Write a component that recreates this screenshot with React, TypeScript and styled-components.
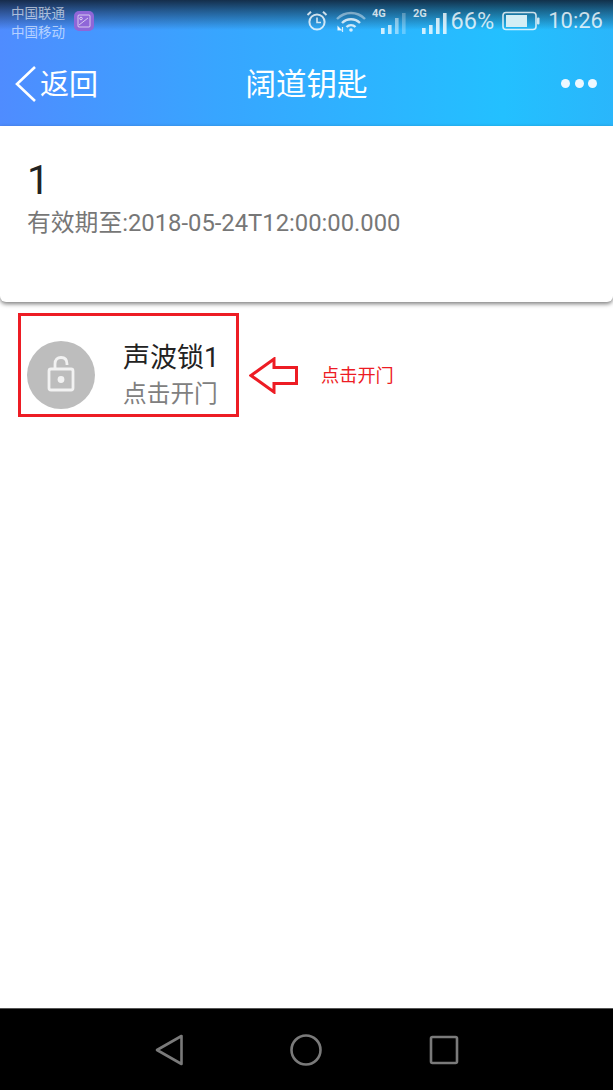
import React from "react";
import styled, { createGlobalStyle } from "styled-components";

const Global = createGlobalStyle`
  html, body { margin: 0; padding: 0; background: #fff; }
  body { font-family: Roboto, "Noto Sans CJK SC", sans-serif; }
`;
const CJK = `Roboto, "Noto Sans CJK SC", sans-serif`;

const Page = styled.div`
  width: 613px; height: 1090px; display: flex; flex-direction: column; overflow: hidden; background: #fff;
`;
const Header = styled.header`
  height: 126px; flex: none; display: flex; flex-direction: column; position: relative;
  background: linear-gradient(90deg, #4f8cff 0%, #38a5ff 35%, #23c0ff 82%, #2ab6fb 100%);
  &::before {
    content: ""; position: absolute; left: 0; right: 0; top: 0; height: 30px;
    background: linear-gradient(180deg, rgba(15,30,50,.88) 0%, rgba(15,30,50,.55) 35%, rgba(15,30,50,0) 100%);
  }
`;
const StatusBar = styled.div`
  height: 42px; flex: none; position: relative; display: flex; align-items: flex-start; padding: 4px 10px 0 11px; box-sizing: border-box;
`;
const Carriers = styled.div`
  display: flex; flex-direction: column; font: 13.5px/19px ${CJK}; color: rgba(255,255,255,.6); width: 54px; white-space: nowrap;
`;
const PurpleBadge = styled.div`
  width: 20px; height: 20px; margin: 7px 0 0 9px; border-radius: 5px; background: #8f66d8; display: flex; align-items: center; justify-content: center;
`;
const StatusRight = styled.div`
  margin-left: auto; display: flex; align-items: center; height: 34px; color: rgba(255,255,255,.78);
`;
const StatusGlyph = styled.svg<{ $gap: number }>`
  flex: none; margin-right: ${(p) => p.$gap}px;
`;
const Percent = styled.span`
  font: 23.5px/34px Roboto, sans-serif; margin: 0 8px 0 4px;
`;
const Clock = styled.span`
  font: 22px/34px Roboto, sans-serif; margin-left: 8px;
`;
const NavRow = styled.div`
  flex: 1; position: relative; display: flex; align-items: center; justify-content: space-between; padding: 0 16px 0 15px; color: #fff;
`;
const Back = styled.div`
  display: flex; align-items: center; gap: 3px; font: 29px/40px ${CJK};
`;
const BackLabel = styled.span`
  padding-top: 2px;
`;
const Title = styled.div`
  position: absolute; left: 0; right: 0; padding-top: 2px; text-align: center; font: 400 30.5px/40px ${CJK};
`;
const Dots = styled.div`
  display: flex; gap: 4.5px; padding-bottom: 1px;
`;
const Dot = styled.span`
  width: 9px; height: 9px; border-radius: 50%; background: #eef8ff;
`;
const Card = styled.section`
  height: 176px; flex: none; box-sizing: border-box; padding: 29px 27px 0; background: #fff; border-radius: 0 0 6px 6px;
  box-shadow: 0 2px 4px rgba(0,0,0,.5);
  position: relative;
`;
const CardNumber = styled.div`
  font: 40px/52px Roboto, sans-serif; color: #222;
`;
const CardMeta = styled.div`
  font: 23.8px/32px ${CJK}; color: #777;
`;
const Body = styled.main`
  flex: 1; padding: 11px 0 0 18px; display: flex; align-items: flex-start;
`;
const LockItem = styled.div`
  width: 221px; height: 104px; box-sizing: border-box; border: 3px solid #ed1c24; display: flex; align-items: center; padding: 20px 0 0 6px;
`;
const LockCircle = styled.div`
  width: 68px; height: 68px; border-radius: 50%; background: #bdbdbd; display: flex; align-items: center; justify-content: center; flex: none;
`;
const LockGlyph = styled.svg`
  margin-bottom: 3px;
`;
const LockText = styled.div`
  margin-left: 28px; padding-top: 2px; display: flex; flex-direction: column;
`;
const LockName = styled.div`
  font: 27px/36px ${CJK}; color: #222; white-space: nowrap;
`;
const LockHint = styled.div`
  font: 23.7px/36px ${CJK}; color: #808080; white-space: nowrap;
`;
const Arrow = styled.svg`
  margin: 44px 0 0 10px; flex: none;
`;
const Note = styled.div`
  font: 18.2px/24px ${CJK}; color: #ed1c24; margin: 51px 0 0 22px; white-space: nowrap;
`;
const BottomNav = styled.nav`
  height: 82px; flex: none; background: #000; display: flex; align-items: center; justify-content: center; gap: 107px; border-top: 1px solid #555; box-sizing: border-box;
`;
const SignalIcon = styled.svg`
  flex: none;
  & + & { margin-left: 7px; }
`;

const Signal: React.FC<{ label: string; dim?: boolean }> = ({ label, dim }) => (
  <SignalIcon width="34" height="26" viewBox="0 0 34 26">
    <text x="0" y="9" fontFamily="Roboto, sans-serif" fontWeight="700" fontSize="11" fill="currentColor">{label}</text>
    <rect x="9" y="20" width="3.6" height="6" fill="currentColor" />
    <rect x="16" y="17" width="3.6" height="9" fill="currentColor" opacity={dim ? 0.9 : 1} />
    <rect x="23" y="10" width="3.6" height="16" fill="currentColor" opacity={dim ? 0.6 : 1} />
    <rect x="30" y="5" width="3.6" height="21" fill="currentColor" opacity={dim ? 0.35 : 1} />
  </SignalIcon>
);

export default function App() {
  return (
    <Page>
      <Global />
      <Header>
        <StatusBar>
          <Carriers>
            <span>中国联通</span>
            <span>中国移动</span>
          </Carriers>
          <PurpleBadge>
            <svg width="14" height="14" viewBox="0 0 14 14" fill="none" stroke="rgba(255,255,255,.65)" strokeWidth="1">
              <rect x="1" y="1" width="12" height="12" rx="1" />
              <circle cx="4" cy="4.5" r="1.3" />
              <path d="M2 11 L11 4" />
            </svg>
          </PurpleBadge>
          <StatusRight>
            <StatusGlyph $gap={8} width="22" height="22" viewBox="0 0 22 22" fill="none" stroke="currentColor" strokeWidth="2">
              <circle cx="11" cy="12" r="7.6" />
              <path d="M11 7.5V12.5H15" strokeWidth="1.6" />
              <path d="M1.5 5 L5 1.8 M20.5 5 L17 1.8" />
            </StatusGlyph>
            <StatusGlyph $gap={6} width="30" height="24" viewBox="0 0 30 24" fill="none" stroke="currentColor" strokeWidth="2.4">
              <path d="M1 10 C9 2 21 2 29 10" opacity=".55" />
              <path d="M6 14 C11 9 19 9 24 14" />
              <path d="M10.5 18 C13 15.5 17 15.5 19.5 18" />
              <circle cx="15" cy="21" r="1.8" fill="currentColor" stroke="none" />
              <path d="M2 18 L5 21 H2 Z M6.5 18 V23" strokeWidth="1.2" fill="currentColor" />
            </StatusGlyph>
            <Signal label="4G" dim />
            <Signal label="2G" />
            <Percent>66%</Percent>
            <svg width="38" height="20" viewBox="0 0 38 20">
              <rect x="1" y="1.5" width="33" height="17" rx="3" fill="none" stroke="currentColor" strokeWidth="1.6" />
              <rect x="4" y="4" width="21" height="12" fill="#d4eef5" />
              <rect x="35" y="6.5" width="2.5" height="7" rx="1" fill="currentColor" />
            </svg>
            <Clock>10:26</Clock>
          </StatusRight>
        </StatusBar>
        <NavRow>
          <Back>
            <svg width="22" height="38" viewBox="0 0 22 38" fill="none" stroke="#fff" strokeWidth="2.6">
              <path d="M20 2 L2 19 L20 36" />
            </svg>
            <BackLabel>返回</BackLabel>
          </Back>
          <Title>阔道钥匙</Title>
          <Dots><Dot /><Dot /><Dot /></Dots>
        </NavRow>
      </Header>
      <Card>
        <CardNumber>1</CardNumber>
        <CardMeta>有效期至:2018-05-24T12:00:00.000</CardMeta>
      </Card>
      <Body>
        <LockItem>
          <LockCircle>
            <LockGlyph width="28" height="36" viewBox="0 0 28 36" fill="none" stroke="#f2f2f2" strokeWidth="2.8">
              <path d="M8 13 V8 C8 3.5 10.5 1.5 14 1.5 C17.5 1.5 20 3.5 20 8 V9" />
              <rect x="2" y="13" width="24" height="21" rx="2" />
              <circle cx="14" cy="23.5" r="3.4" fill="#f2f2f2" stroke="none" />
            </LockGlyph>
          </LockCircle>
          <LockText>
            <LockName>声波锁1</LockName>
            <LockHint>点击开门</LockHint>
          </LockText>
        </LockItem>
        <Arrow width="50" height="37" viewBox="0 0 50 37" fill="none" stroke="#ed1c24" strokeWidth="3">
          <path d="M2 18.5 L25 2 V10.5 H47.5 V26.5 H25 V35 Z" />
        </Arrow>
        <Note>点击开门</Note>
      </Body>
      <BottomNav>
        <svg width="28" height="32" viewBox="0 0 28 32" fill="none" stroke="#7a7a7a" strokeWidth="2.6" strokeLinejoin="round">
          <path d="M26.5 2 V30 L2 16 Z" />
        </svg>
        <svg width="32" height="32" viewBox="0 0 32 32" fill="none" stroke="#7a7a7a" strokeWidth="2.6">
          <circle cx="16" cy="16" r="14.5" />
        </svg>
        <svg width="30" height="30" viewBox="0 0 30 30" fill="none" stroke="#7a7a7a" strokeWidth="2.6" strokeLinejoin="round">
          <rect x="2" y="2" width="26" height="26" rx="1.5" />
        </svg>
      </BottomNav>
    </Page>
  );
}
